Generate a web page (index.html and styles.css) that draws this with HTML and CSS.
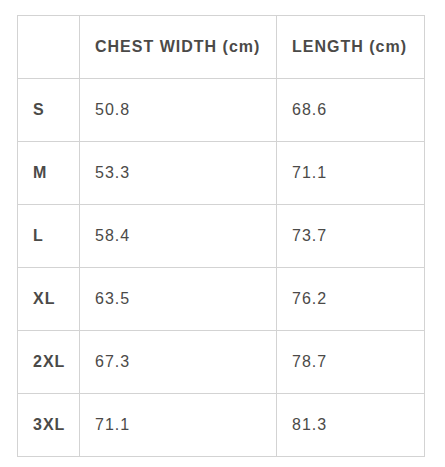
FILE: index.html
```html
<!DOCTYPE html>
<html>
<head>
<meta charset="utf-8">
<link rel="stylesheet" href="styles.css">
</head>
<body>
<table class="size-table">
  <colgroup>
    <col class="c-size">
    <col class="c-chest">
    <col class="c-len">
  </colgroup>
  <thead>
    <tr><th></th><th>CHEST WIDTH (cm)</th><th>LENGTH (cm)</th></tr>
  </thead>
  <tbody>
    <tr><th>S</th><td>50.8</td><td>68.6</td></tr>
    <tr><th>M</th><td>53.3</td><td>71.1</td></tr>
    <tr><th>L</th><td>58.4</td><td>73.7</td></tr>
    <tr><th>XL</th><td>63.5</td><td>76.2</td></tr>
    <tr><th>2XL</th><td>67.3</td><td>78.7</td></tr>
    <tr><th>3XL</th><td>71.1</td><td>81.3</td></tr>
  </tbody>
</table>
</body>
</html>
```
FILE: styles.css
```css
html, body {
  margin: 0;
  background: #ffffff;
}
body {
  padding: 15px 0 0 17px;
  font-family: "Liberation Sans", Arial, sans-serif;
  color: #4b4a48;
}
.size-table {
  border-collapse: collapse;
  width: 407px;
  table-layout: fixed;
}
.c-size { width: 62px; }
.c-chest { width: 197px; }
.c-len { width: 148px; }
.size-table th,
.size-table td {
  border: 1px solid #d3d3d3;
  height: 62px;
  padding: 0 0 0 15px;
  text-align: left;
  vertical-align: middle;
  font-size: 16px;
  letter-spacing: 1px;
}
.size-table th {
  font-weight: bold;
}
.size-table td {
  font-weight: normal;
}
```
